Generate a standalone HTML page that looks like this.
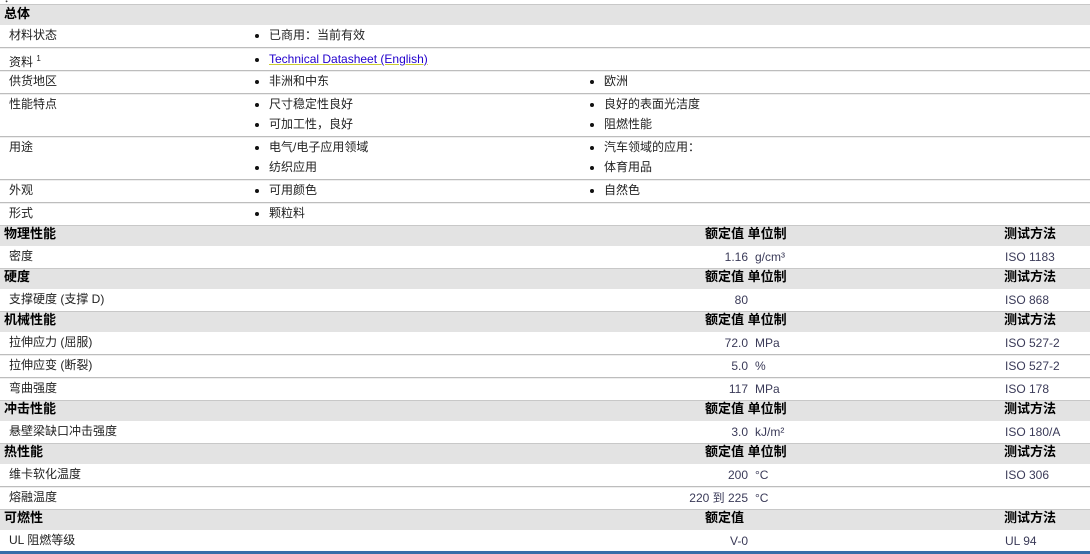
<!DOCTYPE html>
<html><head><meta charset="utf-8"><style>
body{margin:0;width:1090px;height:554px;overflow:hidden;background:#fff;position:relative;font-family:"Liberation Sans","Noto Sans CJK SC",sans-serif;font-size:12px;color:#222}
.h{position:absolute;left:0;width:1090px;background:#e3e3e3;border-top:1px solid #c8c8c8;box-sizing:border-box}
.l{position:absolute;left:0;width:1090px;height:1px;background:#bdbdbd;border-bottom:1px solid #eee}
.t{position:absolute;line-height:16px;white-space:nowrap}
.b{font-weight:bold;font-size:13px;color:#000}
.d{position:absolute;width:4px;height:4px;border-radius:50%;background:#111;margin:1px 0 0 1px}
.r{text-align:right}
.p{color:#3a3a58}
a{color:#2200cc;text-decoration:underline;text-decoration-color:#cc3}
</style></head><body>
<div class="t" style="left:4px;top:-8px;font-size:10px">↓</div>
<div class="h" style="top:4px;height:21px"></div>
<div class="h" style="top:225px;height:21px"></div>
<div class="h" style="top:268px;height:21px"></div>
<div class="h" style="top:311px;height:21px"></div>
<div class="h" style="top:400px;height:21px"></div>
<div class="h" style="top:443px;height:21px"></div>
<div class="h" style="top:509px;height:21px"></div>
<div class="l" style="top:47px"></div><div class="l" style="top:70px"></div><div class="l" style="top:93px"></div>
<div class="l" style="top:136px"></div><div class="l" style="top:179px"></div><div class="l" style="top:202px"></div>
<div class="l" style="top:354px"></div><div class="l" style="top:377px"></div><div class="l" style="top:486px"></div>
<div style="position:absolute;left:0;top:551px;width:1090px;height:3px;background:#3a6ea8"></div>

<div class="t b" style="left:4px;top:6px">总体</div>
<div class="t" style="left:9px;top:27px">材料状态</div><div class="d" style="left:254px;top:33px"></div><div class="t" style="left:269px;top:27px">已商用：当前有效</div>
<div class="t" style="left:9px;top:51px">资料 <sup style="font-size:8px">1</sup></div><div class="d" style="left:254px;top:57px"></div><div class="t" style="left:269px;top:51px"><a>Technical Datasheet (English)</a></div>
<div class="t" style="left:9px;top:73px">供货地区</div><div class="d" style="left:254px;top:79px"></div><div class="t" style="left:269px;top:73px">非洲和中东</div><div class="d" style="left:589px;top:79px"></div><div class="t" style="left:604px;top:73px">欧洲</div>
<div class="t" style="left:9px;top:96px">性能特点</div><div class="d" style="left:254px;top:102px"></div><div class="t" style="left:269px;top:96px">尺寸稳定性良好</div><div class="d" style="left:589px;top:102px"></div><div class="t" style="left:604px;top:96px">良好的表面光洁度</div>
<div class="d" style="left:254px;top:122px"></div><div class="t" style="left:269px;top:116px">可加工性，良好</div><div class="d" style="left:589px;top:122px"></div><div class="t" style="left:604px;top:116px">阻燃性能</div>
<div class="t" style="left:9px;top:139px">用途</div><div class="d" style="left:254px;top:145px"></div><div class="t" style="left:269px;top:139px">电气/电子应用领域</div><div class="d" style="left:589px;top:145px"></div><div class="t" style="left:604px;top:139px">汽车领域的应用：</div>
<div class="d" style="left:254px;top:165px"></div><div class="t" style="left:269px;top:159px">纺织应用</div><div class="d" style="left:589px;top:165px"></div><div class="t" style="left:604px;top:159px">体育用品</div>
<div class="t" style="left:9px;top:182px">外观</div><div class="d" style="left:254px;top:188px"></div><div class="t" style="left:269px;top:182px">可用颜色</div><div class="d" style="left:589px;top:188px"></div><div class="t" style="left:604px;top:182px">自然色</div>
<div class="t" style="left:9px;top:205px">形式</div><div class="d" style="left:254px;top:211px"></div><div class="t" style="left:269px;top:205px">颗粒料</div>

<div class="t b" style="left:4px;top:226px">物理性能</div><div class="t b" style="left:705px;top:226px">额定值 单位制</div><div class="t b" style="left:1004px;top:226px">测试方法</div>
<div class="t" style="left:9px;top:248px">密度</div><div class="t r p" style="right:342px;top:249px">1.16</div><div class="t p" style="left:755px;top:249px">g/cm³</div><div class="t p" style="left:1005px;top:249px">ISO 1183</div>
<div class="t b" style="left:4px;top:269px">硬度</div><div class="t b" style="left:705px;top:269px">额定值 单位制</div><div class="t b" style="left:1004px;top:269px">测试方法</div>
<div class="t" style="left:9px;top:291px">支撑硬度 (支撑 D)</div><div class="t r p" style="right:342px;top:292px">80</div><div class="t p" style="left:1005px;top:292px">ISO 868</div>
<div class="t b" style="left:4px;top:312px">机械性能</div><div class="t b" style="left:705px;top:312px">额定值 单位制</div><div class="t b" style="left:1004px;top:312px">测试方法</div>
<div class="t" style="left:9px;top:334px">拉伸应力 (屈服)</div><div class="t r p" style="right:342px;top:335px">72.0</div><div class="t p" style="left:755px;top:335px">MPa</div><div class="t p" style="left:1005px;top:335px">ISO 527-2</div>
<div class="t" style="left:9px;top:357px">拉伸应变 (断裂)</div><div class="t r p" style="right:342px;top:358px">5.0</div><div class="t p" style="left:755px;top:358px">%</div><div class="t p" style="left:1005px;top:358px">ISO 527-2</div>
<div class="t" style="left:9px;top:380px">弯曲强度</div><div class="t r p" style="right:342px;top:381px">117</div><div class="t p" style="left:755px;top:381px">MPa</div><div class="t p" style="left:1005px;top:381px">ISO 178</div>
<div class="t b" style="left:4px;top:401px">冲击性能</div><div class="t b" style="left:705px;top:401px">额定值 单位制</div><div class="t b" style="left:1004px;top:401px">测试方法</div>
<div class="t" style="left:9px;top:423px">悬壁梁缺口冲击强度</div><div class="t r p" style="right:342px;top:424px">3.0</div><div class="t p" style="left:755px;top:424px">kJ/m²</div><div class="t p" style="left:1005px;top:424px">ISO 180/A</div>
<div class="t b" style="left:4px;top:444px">热性能</div><div class="t b" style="left:705px;top:444px">额定值 单位制</div><div class="t b" style="left:1004px;top:444px">测试方法</div>
<div class="t" style="left:9px;top:466px">维卡软化温度</div><div class="t r p" style="right:342px;top:467px">200</div><div class="t p" style="left:755px;top:467px">°C</div><div class="t p" style="left:1005px;top:467px">ISO 306</div>
<div class="t" style="left:9px;top:489px">熔融温度</div><div class="t r p" style="right:342px;top:490px">220 到 225</div><div class="t p" style="left:755px;top:490px">°C</div>
<div class="t b" style="left:4px;top:510px">可燃性</div><div class="t b" style="left:705px;top:510px">额定值</div><div class="t b" style="left:1004px;top:510px">测试方法</div>
<div class="t" style="left:9px;top:532px">UL 阻燃等级</div><div class="t r p" style="right:342px;top:533px">V-0</div><div class="t p" style="left:1005px;top:533px">UL 94</div>
</body></html>
